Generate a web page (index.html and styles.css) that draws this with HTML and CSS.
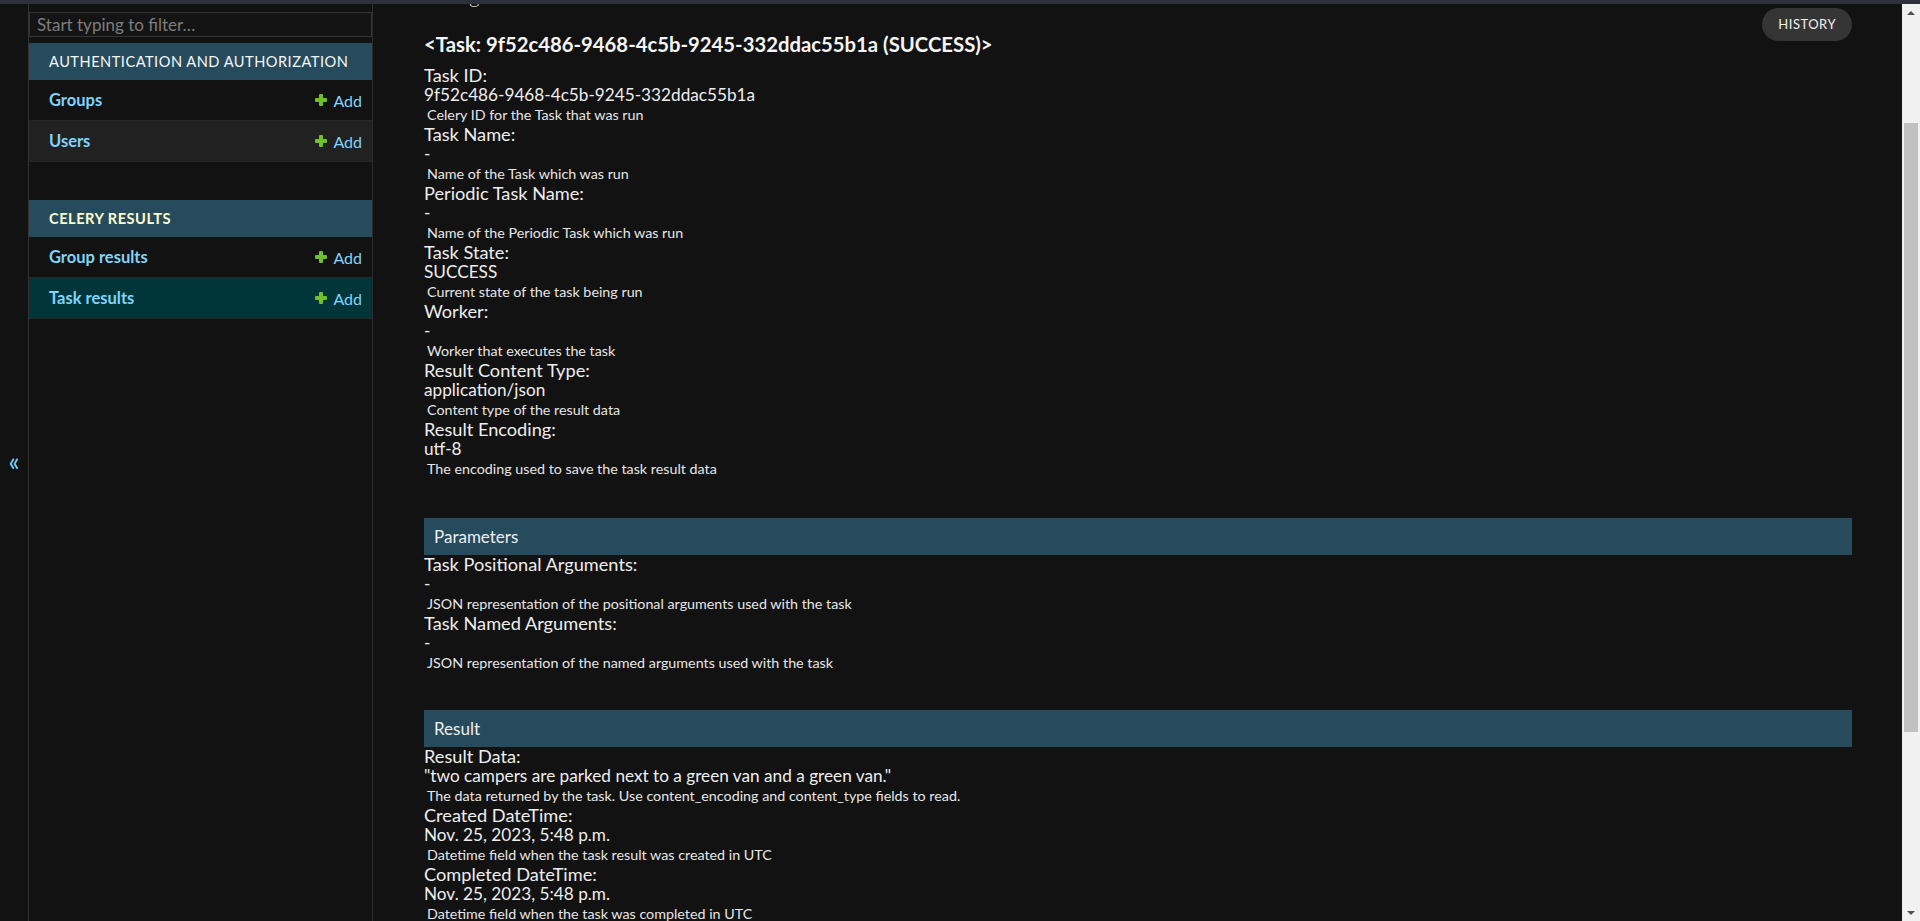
FILE: index.html
```html
<!DOCTYPE html>
<html lang="en">
<head>
<meta charset="utf-8">
<title>Change task result</title>
<link rel="stylesheet" href="styles.css">
</head>
<body>
<div class="topstrip"></div>
<div class="page">
  <div class="toggle"><span class="toggle-glyph">«</span></div>
  <nav class="sidebar">
    <input class="filter" type="search" placeholder="Start typing to filter…">
    <div class="module">
      <div class="caption">Authentication and Authorization</div>
      <div class="row"><a class="model">Groups</a><a class="add"><svg class="plus" viewBox="0 0 12 12"><rect x="4" y="0" width="4" height="12" rx="1"/><rect x="0" y="4" width="12" height="4" rx="1"/></svg>Add</a></div>
      <div class="row alt"><a class="model">Users</a><a class="add"><svg class="plus" viewBox="0 0 12 12"><rect x="4" y="0" width="4" height="12" rx="1"/><rect x="0" y="4" width="12" height="4" rx="1"/></svg>Add</a></div>
    </div>
    <div class="module">
      <div class="caption current">Celery Results</div>
      <div class="row"><a class="model">Group results</a><a class="add"><svg class="plus" viewBox="0 0 12 12"><rect x="4" y="0" width="4" height="12" rx="1"/><rect x="0" y="4" width="12" height="4" rx="1"/></svg>Add</a></div>
      <div class="row selected"><a class="model">Task results</a><a class="add"><svg class="plus" viewBox="0 0 12 12"><rect x="4" y="0" width="4" height="12" rx="1"/><rect x="0" y="4" width="12" height="4" rx="1"/></svg>Add</a></div>
    </div>
  </nav>
  <main class="main">
    <div class="content">
      <div class="head">
        <div class="titles">
          <h1 class="page-title">Change task result</h1>
          <h2 class="object-title">&lt;Task: 9f52c486-9468-4c5b-9245-332ddac55b1a (SUCCESS)&gt;</h2>
        </div>
        <a class="history">History</a>
      </div>

      <div class="fieldset first">
        <div class="field"><div class="label">Task ID:</div><div class="value">9f52c486-9468-4c5b-9245-332ddac55b1a</div><div class="help">Celery ID for the Task that was run</div></div>
        <div class="field"><div class="label">Task Name:</div><div class="value">-</div><div class="help">Name of the Task which was run</div></div>
        <div class="field"><div class="label">Periodic Task Name:</div><div class="value">-</div><div class="help">Name of the Periodic Task which was run</div></div>
        <div class="field"><div class="label">Task State:</div><div class="value">SUCCESS</div><div class="help">Current state of the task being run</div></div>
        <div class="field"><div class="label">Worker:</div><div class="value">-</div><div class="help">Worker that executes the task</div></div>
        <div class="field"><div class="label">Result Content Type:</div><div class="value">application/json</div><div class="help">Content type of the result data</div></div>
        <div class="field"><div class="label">Result Encoding:</div><div class="value">utf-8</div><div class="help">The encoding used to save the task result data</div></div>
      </div>

      <div class="fieldset">
        <div class="fs-header">Parameters</div>
        <div class="field"><div class="label">Task Positional Arguments:</div><div class="value">-</div><div class="help">JSON representation of the positional arguments used with the task</div></div>
        <div class="field"><div class="label">Task Named Arguments:</div><div class="value">-</div><div class="help">JSON representation of the named arguments used with the task</div></div>
      </div>

      <div class="fieldset last">
        <div class="fs-header">Result</div>
        <div class="field"><div class="label">Result Data:</div><div class="value">"two campers are parked next to a green van and a green van."</div><div class="help">The data returned by the task. Use content_encoding and content_type fields to read.</div></div>
        <div class="field"><div class="label">Created DateTime:</div><div class="value">Nov. 25, 2023, 5:48 p.m.</div><div class="help">Datetime field when the task result was created in UTC</div></div>
        <div class="field"><div class="label">Completed DateTime:</div><div class="value">Nov. 25, 2023, 5:48 p.m.</div><div class="help">Datetime field when the task was completed in UTC</div></div>
      </div>
    </div>
  </main>
  <div class="scrollbar">
    <div class="sb-btn"><span class="arrow-up"></span></div>
    <div class="sb-track"><div class="sb-thumb"></div></div>
    <div class="sb-btn"><span class="arrow-down"></span></div>
  </div>
</div>
</body>
</html>
```

FILE: styles.css
```css
html, body {
  margin: 0;
  padding: 0;
}
body {
  width: 1920px;
  height: 921px;
  overflow: hidden;
  background: #121212;
  color: #eeeeee;
  font-family: Lato, "Open Sans", sans-serif;
}
a { text-decoration: none; }

.topstrip {
  height: 4px;
  background: #2d313c;
}
.page {
  display: flex;
  height: 917px;
}

/* toggle column */
.toggle {
  width: 28px;
  border-right: 1px solid #333333;
  display: flex;
  align-items: center;
  justify-content: center;
}
.toggle-glyph {
  color: #81d4fa;
  font-size: 26px;
  line-height: 1;
  margin-top: -4px;
}

/* sidebar */
.sidebar {
  width: 343px;
  border-right: 1px solid #2c2c2c;
  display: flex;
  flex-direction: column;
}
.filter {
  box-sizing: border-box;
  width: 100%;
  height: 25px;
  margin: 8px 0 6px;
  padding: 0 7px;
  border: 1px solid #353535;
  background: #141414;
  color: #eeeeee;
  font-family: Lato, "Open Sans", sans-serif;
  font-size: 17px;
  outline: none;
}
.filter::placeholder { color: #7d7d7d; }
.module { margin-bottom: 38px; }
.caption {
  height: 37px;
  line-height: 37px;
  padding-left: 20px;
  background: #264b5d;
  color: #f7f7f7;
  font-size: 14.6px;
  letter-spacing: 0.5px;
  text-transform: uppercase;
}
.caption.current {
  color: #ffffcc;
  font-weight: bold;
}
.row {
  height: 40px;
  border-bottom: 1px solid #262626;
  display: flex;
  align-items: center;
  justify-content: space-between;
  padding: 0 10px 0 20px;
}
.row.alt { background: #212121; }
.row.selected { background: #00363a; }
.model {
  color: #81d4fa;
  font-weight: bold;
  font-size: 16.5px;
}
.add {
  color: #81d4fa;
  font-size: 16px;
  display: flex;
  align-items: center;
}
.plus {
  width: 12px;
  height: 12px;
  fill: #70bf2b;
  margin-right: 6px;
}

/* main */
.main {
  flex: 1;
  overflow: hidden;
}
.content {
  margin-top: -20px;
  padding: 0 50px 0 51px;
}
.head {
  display: flex;
  justify-content: space-between;
  align-items: flex-start;
}
.page-title {
  margin: 0;
  font-size: 20px;
  line-height: 24px;
  font-weight: 300;
  color: #e0e0e0;
}
.object-title {
  margin: 24px 0 0;
  font-size: 20.3px;
  line-height: 24px;
  font-weight: bold;
  color: #f5f5f5;
}
.history {
  margin-top: 24px;
  height: 33px;
  line-height: 33px;
  padding: 0 16px;
  border-radius: 17px;
  background: #353535;
  color: #f0f0f0;
  font-size: 13px;
  letter-spacing: 0.5px;
  text-transform: uppercase;
}

.fieldset { margin-top: 39px; }
.fieldset.first { margin-top: 10px; }
.fieldset.last { margin-top: 37px; }
.fs-header {
  height: 37px;
  line-height: 37px;
  padding-left: 10px;
  background: #264b5d;
  color: #eeeeee;
  font-size: 17px;
}
.label {
  font-size: 18.2px;
  line-height: 19px;
  color: #eeeeee;
}
.value {
  font-size: 17.2px;
  line-height: 20px;
  color: #eeeeee;
}
.help {
  font-size: 14.3px;
  line-height: 20px;
  padding-left: 3px;
  color: #e6e6e6;
}

/* scrollbar */
.scrollbar {
  width: 18px;
  background: #f1f1f1;
  display: flex;
  flex-direction: column;
}
.sb-btn {
  height: 17px;
  display: flex;
  align-items: center;
  justify-content: center;
}
.arrow-up {
  width: 0;
  height: 0;
  border-left: 4px solid transparent;
  border-right: 4px solid transparent;
  border-bottom: 4px solid #505050;
}
.arrow-down {
  width: 0;
  height: 0;
  border-left: 4px solid transparent;
  border-right: 4px solid transparent;
  border-top: 4px solid #505050;
}
.sb-track {
  flex: 1;
  padding: 102px 2px 0;
}
.sb-thumb {
  height: 609px;
  background: #c1c1c1;
}
```
